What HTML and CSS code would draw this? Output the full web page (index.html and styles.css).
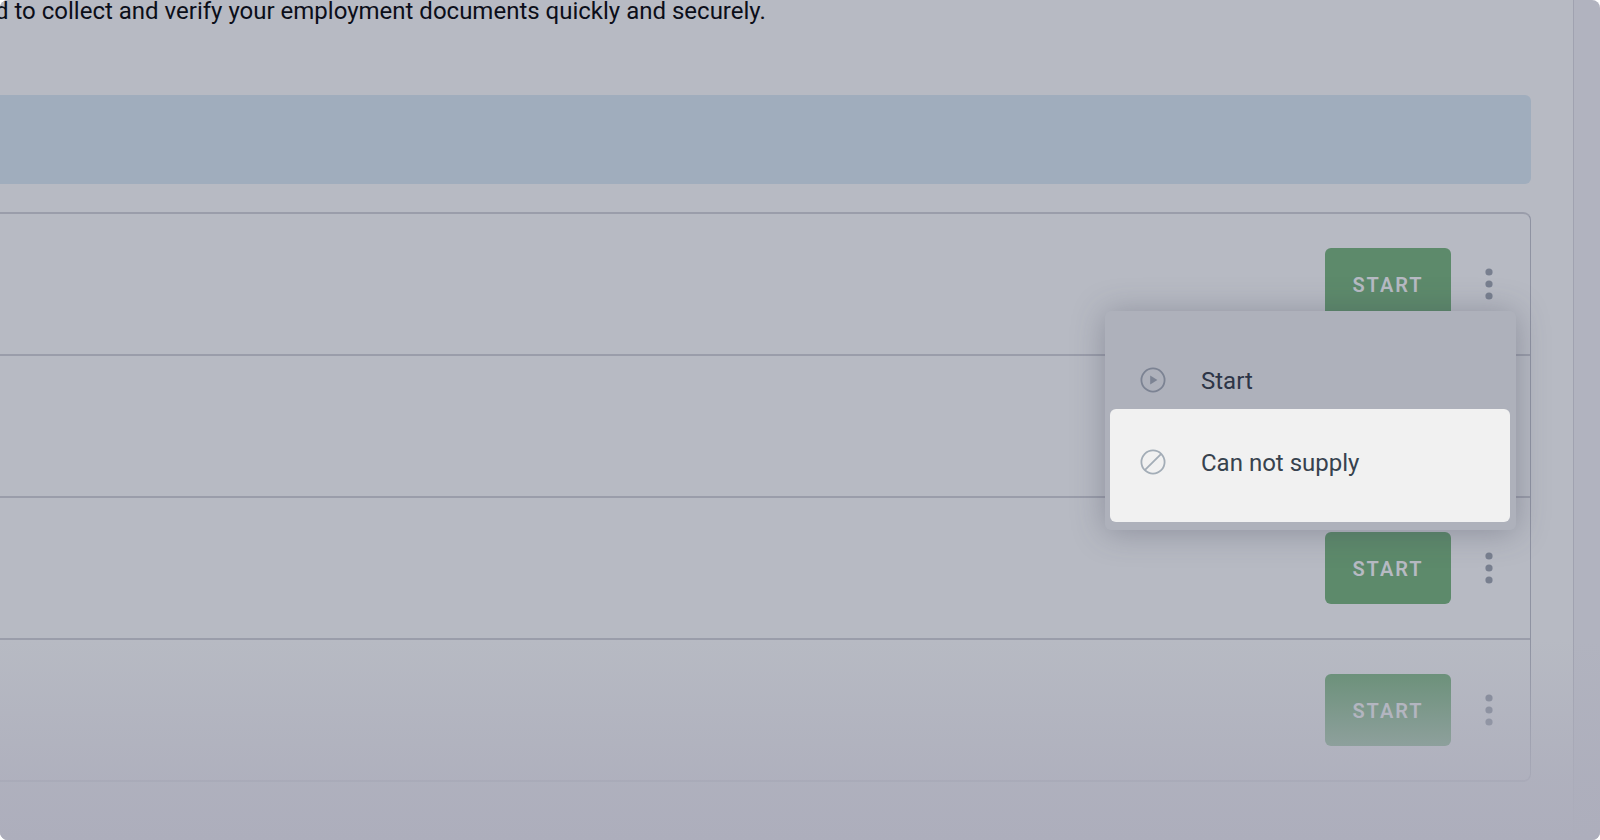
FILE: index.html
```html
<!DOCTYPE html>
<html lang="en">
  <head>
    <meta charset="UTF-8" />
    <title>Employment documents</title>
    <link rel="stylesheet" href="styles.css">
  </head>
  <body>
    <div class="screen">
      <main class="panel">
        <p class="intro">d to collect and verify your employment documents quickly and securely.</p>
        <div class="banner"></div>
        <ul class="requests">
          <li class="request">
            <button type="button" class="start-btn">START</button>
            <button type="button" class="more-btn" aria-label="More options">
              <svg width="8" height="32" viewBox="0 0 8 32"><circle cx="4" cy="4" r="3.6" /><circle cx="4" cy="16" r="3.6" /><circle cx="4" cy="28" r="3.6" /></svg>
            </button>
            <div class="menu">
              <button type="button" class="menu-item">
                <svg width="26" height="26" viewBox="0 0 26 26">
                  <circle cx="13" cy="13" r="11.6" />
                  <path class="solid" d="M10.2 8.4 17.4 13l-7.2 4.6z" />
                </svg>
                <span>Start</span>
              </button>
              <button type="button" class="menu-item active">
                <svg width="26" height="26" viewBox="0 0 26 26">
                  <circle cx="13" cy="13" r="11.6" />
                  <path d="M4.8 21.2 21.2 4.8" />
                </svg>
                <span>Can not supply</span>
              </button>
            </div>
          </li>
          <li class="request">
            <button type="button" class="start-btn">START</button>
            <button type="button" class="more-btn" aria-label="More options">
              <svg width="8" height="32" viewBox="0 0 8 32"><circle cx="4" cy="4" r="3.6" /><circle cx="4" cy="16" r="3.6" /><circle cx="4" cy="28" r="3.6" /></svg>
            </button>
          </li>
          <li class="request">
            <button type="button" class="start-btn">START</button>
            <button type="button" class="more-btn" aria-label="More options">
              <svg width="8" height="32" viewBox="0 0 8 32"><circle cx="4" cy="4" r="3.6" /><circle cx="4" cy="16" r="3.6" /><circle cx="4" cy="28" r="3.6" /></svg>
            </button>
          </li>
          <li class="request">
            <button type="button" class="start-btn">START</button>
            <button type="button" class="more-btn" aria-label="More options">
              <svg width="8" height="32" viewBox="0 0 8 32"><circle cx="4" cy="4" r="3.6" /><circle cx="4" cy="16" r="3.6" /><circle cx="4" cy="28" r="3.6" /></svg>
            </button>
          </li>
        </ul>
      </main>
    </div>
  </body>
</html>
```
FILE: styles.css
```css
* {
  box-sizing: border-box;
}

body {
  margin: 0;
  background-color: #fff;
  font-family: Roboto, "Liberation Sans", sans-serif;
  font-size: 24px;
}

button {
  border: none;
  padding: 0;
  font-family: inherit;
  cursor: pointer;
}

.screen {
  position: relative;
  display: flex;
  min-height: 100vh;
  padding-right: 26px;
  border-radius: 8px;
  background-color: #b1b3bf;
  overflow: hidden;
}

/* fades the bottom of the page out */
.screen::after {
  content: "";
  position: absolute;
  left: 0;
  right: 0;
  bottom: 0;
  height: 200px;
  background: linear-gradient(rgba(173, 174, 188, 0), rgba(173, 174, 188, 0.8) 70%, #adaebc);
  pointer-events: none;
}

.panel {
  flex: 1;
  margin-left: -5px;
  padding-right: 42px;
  border-right: 1px solid #a0a2b0;
  background-color: #b7bac3;
}

.intro {
  margin: 0;
  line-height: 22px;
  color: #0b0e19;
  white-space: nowrap;
}

.banner {
  height: 89px;
  margin-top: 73px;
  border-radius: 6px;
  background-color: #a0adbd;
}

.requests {
  list-style: none;
  margin: 28px 0 0;
  padding: 0;
  border: 2px solid #9a9daa;
  border-right: 1px solid #8f93a2;
  border-left: none;
  border-radius: 0 8px 8px 0;
}

.request {
  position: relative;
  display: flex;
  align-items: center;
  justify-content: flex-end;
  gap: 26px;
  padding: 34px 29px;
}

.request + .request {
  border-top: 2px solid #9a9daa;
}

.start-btn {
  width: 126px;
  height: 72px;
  padding-top: 2px;
  border-radius: 6px;
  background-color: #5d8a6b;
  color: #b7bac3;
  font-size: 20px;
  font-weight: 600;
  letter-spacing: 2px;
}

.more-btn {
  display: flex;
  justify-content: center;
  width: 24px;
  background: none;
  fill: #787f8f;
}

.menu {
  position: absolute;
  top: 97px;
  right: 14px;
  z-index: 1;
  width: 411px;
  padding: 40px 6px 8px 5px;
  border-radius: 6px;
  background-color: #aeb1bb;
  box-shadow: 0 2px 32px rgba(60, 64, 84, 0.35);
}

.menu-item {
  display: flex;
  align-items: center;
  gap: 35px;
  width: 100%;
  height: 58px;
  padding-left: 30px;
  background: none;
  color: #2d3547;
  font-size: 24px;
}

.menu-item span {
  padding-top: 2px;
}

.menu-item svg {
  fill: none;
  stroke: #7c8393;
  stroke-width: 1.8;
}

.menu-item .solid {
  fill: #7c8393;
  stroke: none;
}

.menu-item.active {
  height: 113px;
  padding-bottom: 7px;
  border-radius: 6px;
  background-color: #f1f1f1;
  color: #37424e;
}

.menu-item.active svg {
  stroke: #a3adb7;
}
```
